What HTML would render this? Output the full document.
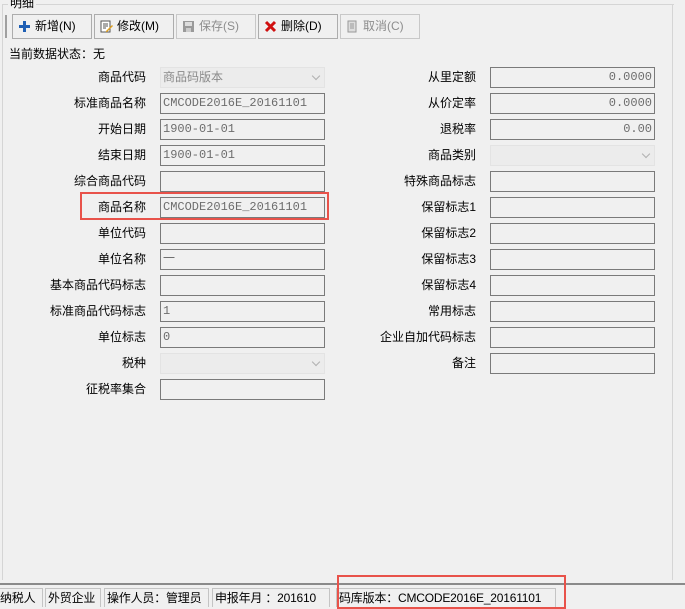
<!DOCTYPE html>
<html><head><meta charset="utf-8"><style>
*{margin:0;padding:0;box-sizing:border-box}
body{width:685px;height:607px;background:#f0f0f0;position:relative;overflow:hidden;font-family:"Liberation Sans","Noto Sans CJK SC",sans-serif;font-size:12px;color:#000}
.a{position:absolute}
.lbl{position:absolute;text-align:right;line-height:21px;white-space:nowrap}
.in{position:absolute;height:21px;border:1px solid #7a7a7a;background:#f0f0f0;color:#6d6d6d;font-family:"Liberation Mono","Noto Sans CJK SC",monospace;font-size:12px;line-height:19px;padding:0 2px;white-space:nowrap}
.sel{position:absolute;height:21px;border:1px solid #e3e3e3;background:#ececec;color:#8a8a8a;line-height:19px;padding:0 2px}
.sel:after{content:"";position:absolute;right:5px;top:5px;width:5px;height:5px;border-right:1px solid #b0b0b0;border-bottom:1px solid #b0b0b0;transform:rotate(45deg)}
.btn{position:absolute;top:14px;height:25px;border:1px solid #adadad;background:#f0f0f0;line-height:23px;padding-left:22px;font-size:12px}
.btn.d{color:#8d8d8d;border-color:#c8c8c8}
.ic{position:absolute;left:5px;top:5px;width:13px;height:13px}
.sb{position:absolute;top:588px;height:19px;border:1px solid #c4c4c4;border-bottom:none;line-height:19px;padding:0 2px;font-size:12px;letter-spacing:-0.2px;white-space:nowrap;overflow:hidden}
</style></head><body>
<div class="a" style="left:2px;top:4px;width:672px;height:1px;background:#d5d5d5"></div>
<div class="a" style="left:2px;top:4px;width:1px;height:576px;background:#d5d5d5"></div>
<div class="a" style="left:672px;top:4px;width:1px;height:576px;background:#d5d5d5"></div>
<div class="a" style="left:8px;top:-5px;padding:0 2px;background:#f0f0f0;line-height:16px">明细</div>
<div class="a" style="left:5px;top:15px;width:2px;height:23px;background:#a0a0a0"></div>

<div class="btn" style="left:12px;width:80px"><svg class="ic" viewBox="0 0 13 13"><path d="M5 1h3v4h4v3H8v4H5V8H1V5h4z" fill="#1f5fb4"/></svg>新增(N)</div>
<div class="btn" style="left:94px;width:80px"><svg class="ic" viewBox="0 0 13 13"><rect x="1" y="1" width="9" height="11" fill="#fff" stroke="#555"/><path d="M3 4h5M3 6h5M3 8h3" stroke="#555"/><path d="M6 11l6-6 1 1-6 6H6z" fill="#e0a020"/></svg>修改(M)</div>
<div class="btn d" style="left:176px;width:80px"><svg class="ic" viewBox="0 0 13 13"><rect x="1" y="1" width="11" height="11" fill="#9a9a9a"/><rect x="3" y="2" width="7" height="4" fill="#ddd"/><rect x="4" y="8" width="5" height="4" fill="#ccc"/></svg>保存(S)</div>
<div class="btn" style="left:258px;width:80px"><svg class="ic" viewBox="0 0 13 13"><path d="M2 2l9 9M11 2l-9 9" stroke="#d01010" stroke-width="3"/></svg>删除(D)</div>
<div class="btn d" style="left:340px;width:80px"><svg class="ic" viewBox="0 0 13 13"><rect x="2" y="1" width="8" height="11" fill="#ddd" stroke="#999"/><path d="M4 4h4M4 6h4M4 8h4" stroke="#999"/></svg>取消(C)</div>

<div class="a" style="left:9px;top:46px;line-height:16px">当前数据状态：无</div>

<div class="lbl" style="right:539px;top:67px">商品代码</div>
<div class="sel" style="left:160px;top:67px;width:165px">商品码版本</div>
<div class="lbl" style="right:539px;top:93px">标准商品名称</div>
<div class="in" style="left:160px;top:93px;width:165px">CMCODE2016E_20161101</div>
<div class="lbl" style="right:539px;top:119px">开始日期</div>
<div class="in" style="left:160px;top:119px;width:165px">1900-01-01</div>
<div class="lbl" style="right:539px;top:145px">结束日期</div>
<div class="in" style="left:160px;top:145px;width:165px">1900-01-01</div>
<div class="lbl" style="right:539px;top:171px">综合商品代码</div>
<div class="in" style="left:160px;top:171px;width:165px"></div>
<div class="lbl" style="right:539px;top:197px">商品名称</div>
<div class="in" style="left:160px;top:197px;width:165px">CMCODE2016E_20161101</div>
<div class="lbl" style="right:539px;top:223px">单位代码</div>
<div class="in" style="left:160px;top:223px;width:165px"></div>
<div class="lbl" style="right:539px;top:249px">单位名称</div>
<div class="in" style="left:160px;top:249px;width:165px">一</div>
<div class="lbl" style="right:539px;top:275px">基本商品代码标志</div>
<div class="in" style="left:160px;top:275px;width:165px"></div>
<div class="lbl" style="right:539px;top:301px">标准商品代码标志</div>
<div class="in" style="left:160px;top:301px;width:165px">1</div>
<div class="lbl" style="right:539px;top:327px">单位标志</div>
<div class="in" style="left:160px;top:327px;width:165px">0</div>
<div class="lbl" style="right:539px;top:353px">税种</div>
<div class="sel" style="left:160px;top:353px;width:165px"></div>
<div class="lbl" style="right:539px;top:379px">征税率集合</div>
<div class="in" style="left:160px;top:379px;width:165px"></div>

<div class="a" style="left:80px;top:192px;width:249px;height:28px;border:2px solid #e8524a"></div>

<div class="lbl" style="right:209px;top:67px">从里定额</div>
<div class="in" style="left:490px;top:67px;width:165px;text-align:right">0.0000</div>
<div class="lbl" style="right:209px;top:93px">从价定率</div>
<div class="in" style="left:490px;top:93px;width:165px;text-align:right">0.0000</div>
<div class="lbl" style="right:209px;top:119px">退税率</div>
<div class="in" style="left:490px;top:119px;width:165px;text-align:right">0.00</div>
<div class="lbl" style="right:209px;top:145px">商品类别</div>
<div class="sel" style="left:490px;top:145px;width:165px"></div>
<div class="lbl" style="right:209px;top:171px">特殊商品标志</div>
<div class="in" style="left:490px;top:171px;width:165px"></div>
<div class="lbl" style="right:209px;top:197px">保留标志1</div>
<div class="in" style="left:490px;top:197px;width:165px"></div>
<div class="lbl" style="right:209px;top:223px">保留标志2</div>
<div class="in" style="left:490px;top:223px;width:165px"></div>
<div class="lbl" style="right:209px;top:249px">保留标志3</div>
<div class="in" style="left:490px;top:249px;width:165px"></div>
<div class="lbl" style="right:209px;top:275px">保留标志4</div>
<div class="in" style="left:490px;top:275px;width:165px"></div>
<div class="lbl" style="right:209px;top:301px">常用标志</div>
<div class="in" style="left:490px;top:301px;width:165px"></div>
<div class="lbl" style="right:209px;top:327px">企业自加代码标志</div>
<div class="in" style="left:490px;top:327px;width:165px"></div>
<div class="lbl" style="right:209px;top:353px">备注</div>
<div class="in" style="left:490px;top:353px;width:165px"></div>

<div class="a" style="left:0;top:583px;width:685px;height:2px;background:#8a8a8a"></div>
<div class="sb" style="left:-3px;width:46px">纳税人</div>
<div class="sb" style="left:45px;width:56px">外贸企业</div>
<div class="sb" style="left:104px;width:105px">操作人员：管理员</div>
<div class="sb" style="left:212px;width:118px">申报年月 ：201610</div>
<div class="sb" style="left:336px;width:220px">码库版本：CMCODE2016E_20161101</div>
<div class="a" style="left:337px;top:575px;width:229px;height:34px;border:2px solid #e8524a"></div>
</body></html>
